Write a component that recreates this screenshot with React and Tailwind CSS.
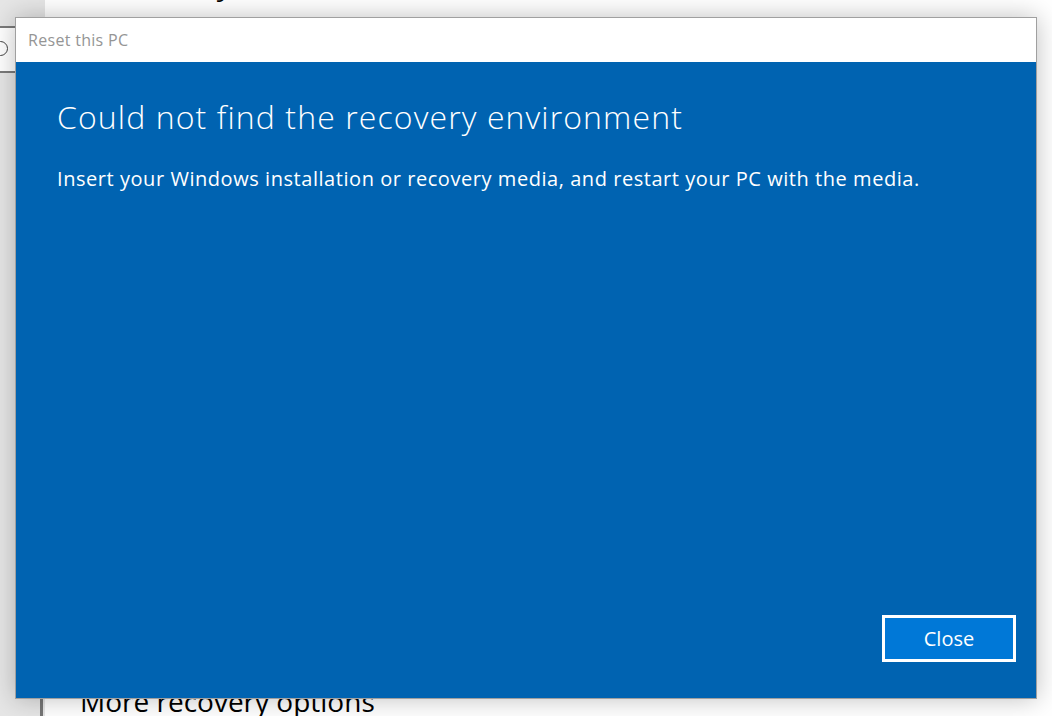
import { useState } from "react";

export default function App() {
  const [open, setOpen] = useState(true);

  return (
    <div className="relative w-[1052px] h-[716px] overflow-hidden bg-white font-['Open_Sans',sans-serif]">
      <div className="flex h-full">
        {/* settings nav strip */}
        <div className="relative w-[45px] h-full bg-[#e6e6e6]">
          <div className="absolute left-[-40px] top-[26px] w-[62px] h-[47px] border-2 border-[#7a7a7a] bg-white" />
          <span className="absolute left-[-7px] top-[41px] block w-[15px] h-[15px] rounded-full border-[1.5px] border-[#444]" />
          <div className="absolute left-[40px] top-[680px] w-[3px] h-[40px] bg-[#767676]" />
        </div>
        <div className="flex-1 flex flex-col justify-between pl-[35px]">
          <h1 className="mt-[-41px] text-[38px] leading-[38px] font-light text-black">Recovery</h1>
          <h2 className="mb-[-6px] text-[28px] text-black">More recovery options</h2>
        </div>
      </div>

      {open && (
        <div className="absolute left-[15px] top-[17px] w-[1022px] h-[682px] flex flex-col border border-[#a0a0a0] shadow-[0_0_24px_rgba(0,0,0,0.25)]">
          <div className="h-[44px] bg-white flex items-center px-[12px]">
            <span className="text-[16px] tracking-[0.3px] text-[#959595]">Reset this PC</span>
          </div>
          <div className="flex-1 bg-[#0063b1] flex flex-col px-[41px] pt-[35px] pb-[36px] text-white">
            <h2 className="text-[32px] font-light leading-[40px] tracking-[1.1px]">
              Could not find the recovery environment
            </h2>
            <p className="mt-[28px] text-[20px] leading-[28px] tracking-[0.55px]">
              Insert your Windows installation or recovery media, and restart your PC with the media.
            </p>
            <div className="flex-1" />
            <div className="flex justify-end -mr-[21px]">
              <button
                onClick={() => setOpen(false)}
                className="w-[134px] h-[47px] border-[3px] border-white bg-[#0078d7] text-[20px] text-white"
              >
                Close
              </button>
            </div>
          </div>
        </div>
      )}
    </div>
  );
}
